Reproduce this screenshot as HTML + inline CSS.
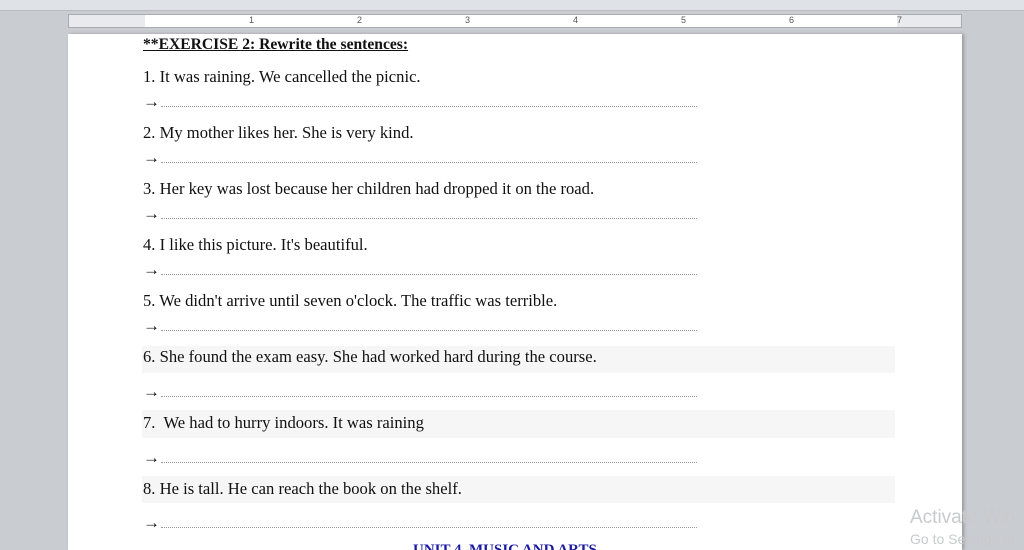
<!DOCTYPE html><html style="width:1024px;height:550px;overflow:hidden"><head><style>
body{margin:0;width:1024px;height:550px;overflow:hidden;background:#c9ccd1;font-family:"Liberation Serif",serif;position:relative}
.top{position:absolute;left:0;top:0;width:1024px;height:10px;background:#dfe2e6;border-bottom:1px solid #b8bcc2}
.ruler{position:absolute;left:68px;top:14px;width:894px;height:14px;background:#e8eaed;border:1px solid #a9adb3;box-sizing:border-box;font:9px "Liberation Sans",sans-serif;color:#555}
.ruler .w{position:absolute;left:76px;right:64px;top:0;bottom:0;background:#fff}
.ruler span{position:absolute;top:0}
.page{position:absolute;left:68px;top:34px;width:894px;height:516px;background:#fff;box-shadow:2px 0 3px #999}
.t{position:absolute;left:143px;font-size:16.6px;color:#111;white-space:nowrap}
.a{position:absolute;left:143px;font-size:17px;font-weight:bold;color:#111}
.d{position:absolute;left:161px;width:536px;border-bottom:1px dotted #999}
.b{position:absolute;left:142px;width:753px;background:#f6f6f6}
.wm{position:absolute;left:910px;color:#c8cacd;font-family:"Liberation Sans",sans-serif}
</style></head><body>
<div class="top"></div>
<div class="ruler"><div class="w"></div>
<span style="left:180px">1</span><span style="left:288px">2</span><span style="left:396px">3</span><span style="left:504px">4</span><span style="left:612px">5</span><span style="left:720px">6</span><span style="left:828px">7</span></div>
<div class="page"></div>
<div class="b" style="top:346px;height:27px"></div>
<div class="b" style="top:410px;height:28px"></div>
<div class="b" style="top:476px;height:27px"></div>
<div class="t" style="top:36px;font-weight:bold;font-size:15.6px;text-decoration:underline">**EXERCISE 2: Rewrite the sentences:</div>
<div class="t" style="top:67px">1. It was raining. We cancelled the picnic.</div>
<div class="a" style="top:92px">→</div><div class="d" style="top:106px"></div>
<div class="t" style="top:123px">2. My mother likes her. She is very kind.</div>
<div class="a" style="top:148px">→</div><div class="d" style="top:162px"></div>
<div class="t" style="top:179px">3. Her key was lost because her children had dropped it on the road.</div>
<div class="a" style="top:204px">→</div><div class="d" style="top:218px"></div>
<div class="t" style="top:235px">4. I like this picture. It's beautiful.</div>
<div class="a" style="top:260px">→</div><div class="d" style="top:274px"></div>
<div class="t" style="top:291px">5. We didn't arrive until seven o'clock. The traffic was terrible.</div>
<div class="a" style="top:316px">→</div><div class="d" style="top:330px"></div>
<div class="t" style="top:347px">6. She found the exam easy. She had worked hard during the course.</div>
<div class="a" style="top:382px">→</div><div class="d" style="top:396px"></div>
<div class="t" style="top:413px">7.&nbsp; We had to hurry indoors. It was raining</div>
<div class="a" style="top:448px">→</div><div class="d" style="top:462px"></div>
<div class="t" style="top:479px">8. He is tall. He can reach the book on the shelf.</div>
<div class="a" style="top:513px">→</div><div class="d" style="top:527px"></div>
<div class="t" style="top:542px;left:413px;font-size:15px;color:#1a1aa0;font-weight:bold">UNIT 4. MUSIC AND ARTS</div>
<div class="wm" style="top:507px;font-size:19px">Activate Win</div>
<div class="wm" style="top:531px;font-size:14px">Go to Settings to</div>
</body></html>
